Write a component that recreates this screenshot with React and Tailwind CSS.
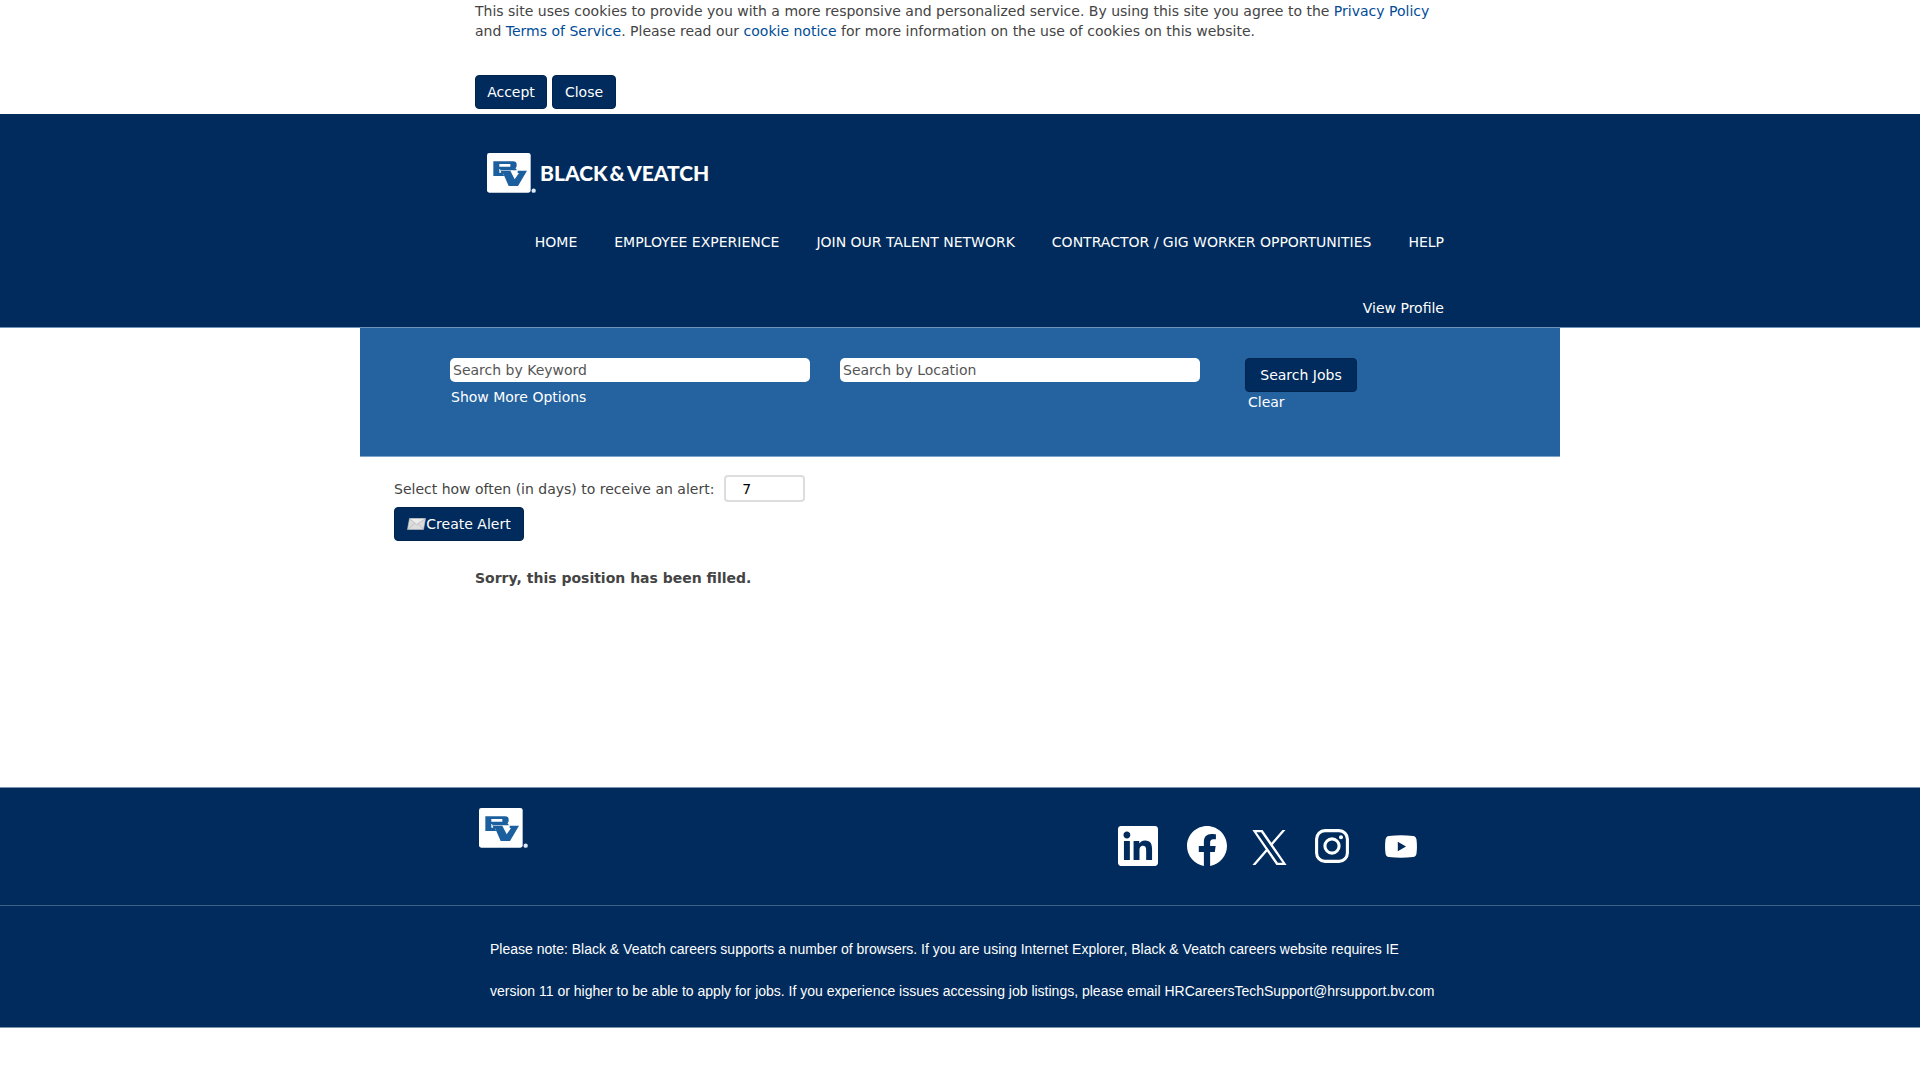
import React from "react";

const navItems = [
  "HOME",
  "EMPLOYEE EXPERIENCE",
  "JOIN OUR TALENT NETWORK",
  "CONTRACTOR / GIG WORKER OPPORTUNITIES",
  "HELP",
];

function BrandMark() {
  return (
    <svg viewBox="0 0 147 120" className="h-10 w-[49px]" role="img" aria-label="Black &amp; Veatch">
      <rect x="0" y="0" width="131" height="119" rx="7" fill="#fff" />
      <circle cx="140" cy="113" r="6.5" fill="#dcebf7" />
      <path
        fill="#1c5f9e"
        fillRule="evenodd"
        d="M19 25H78Q89 25 89 35V38Q89 43 85 46Q89 48 89 52H41L47 60L52 69H19ZM37 33V41H70V33ZM37 48V59H44L39 48Z"
      />
      <path fill="#1c5f9e" d="M41 53H70L83 79L96 60H92V53H120L93 99H65L49 62H44Z" />
    </svg>
  );
}

function Envelope() {
  return (
    <svg viewBox="0 0 19 12" className="h-3 w-[19px]" aria-hidden="true">
      <path d="M2.5.5H18.5L16.5 11.5H.5Z" fill="#dcdcdc" stroke="#c4c4c4" strokeWidth=".6" />
      <path d="M3.2.8H17.6L9.6 6.2Z" fill="#ececec" />
      <path d="M2.5.8 9.5 6.6 18.3.8M.8 11.3 7.5 5.4M16.3 11.3 11.5 5.8" fill="none" stroke="#b4b4b4" strokeWidth=".7" />
    </svg>
  );
}

const button =
  "flex h-[34px] cursor-pointer items-center justify-center rounded-[4px] border border-[#00254d] bg-[#002b5c] text-white";
const link = "text-[#004c97] hover:underline";

export default function App() {
  return (
    <div className="min-h-screen bg-white font-['Verdana','DejaVu_Sans',sans-serif] text-[14px] leading-5 text-[#444]">
      <section aria-label="Cookie notice" className="mx-auto max-w-[970px] pt-px pb-[5px]">
        <p>
          This site uses cookies to provide you with a more responsive and personalized service. By using this site you agree to the{" "}
          <a href="#privacy" className={link}>Privacy Policy</a> and{" "}
          <a href="#terms" className={link}>Terms of Service</a>. Please read our{" "}
          <a href="#cookies" className={link}>cookie notice</a> for more information on the use of cookies on this website.
        </p>
        <div className="mt-[34px] flex gap-[5px]">
          <button type="button" className={`${button} w-[72px]`}>Accept</button>
          <button type="button" className={`${button} w-16`}>Close</button>
        </div>
      </section>

      <header className="border-b border-[#6f93ba] bg-[#002b5c] text-white">
        <div className="mx-auto max-w-[970px] pt-[39px] pb-[9px]">
          <a href="#home" className="ml-3 flex h-10 w-fit items-center gap-1">
            <BrandMark />
            <span className="flex gap-[2px] font-['Lato',sans-serif] text-[21px] font-black">
              <span>BLACK</span>
              <span>&amp;</span>
              <span>VEATCH</span>
            </span>
          </a>
          <nav className="mt-[39px] flex justify-end gap-[37px] pr-px">
            {navItems.map((item) => (
              <a key={item} href="#nav" className="whitespace-nowrap hover:underline">{item}</a>
            ))}
          </nav>
          <div className="mt-[46px] flex justify-end pr-px">
            <a href="#profile" className="hover:underline">View Profile</a>
          </div>
        </div>
      </header>

      <main>
        <form className="mx-auto flex h-[129px] max-w-[1200px] items-start border-b border-[#7ea6cc] bg-[#2563a0] px-[90px] pt-[30px] text-white">
          <div className="w-[360px]">
            <input type="text" aria-label="Search by Keyword" placeholder="Search by Keyword" className="block h-6 w-full rounded-[5px] bg-white px-[3px] text-[#444] placeholder:text-[#555]" />
            <a href="#options" className="mt-[5px] ml-px block w-fit hover:underline">Show More Options</a>
          </div>
          <input type="text" aria-label="Search by Location" placeholder="Search by Location" className="ml-[30px] block h-6 w-[360px] rounded-[5px] bg-white px-[3px] text-[#444] placeholder:text-[#555]" />
          <div className="ml-[45px]">
            <button type="submit" className={`${button} w-28`}>Search Jobs</button>
            <a href="#clear" className="ml-[3px] block w-fit hover:underline">Clear</a>
          </div>
        </form>

        <div className="mx-auto max-w-[1132px] pt-[18px]">
          <div className="flex items-center gap-[10px]">
            <label htmlFor="frequency">Select how often (in days) to receive an alert:</label>
            <input id="frequency" type="text" defaultValue="7" className="h-[27px] w-[81px] rounded-[4px] border-2 border-[#ddd] px-4 text-black" />
          </div>
          <button type="button" className={`${button} mt-[5px] w-[130px]`}>
            <Envelope />
            Create Alert
          </button>
        </div>
        <div className="mx-auto min-h-[246px] max-w-[970px] pt-[27px]">
          <h1 className="font-bold">Sorry, this position has been filled.</h1>
        </div>
      </main>

      <footer className="border-y border-[#7c93ae] bg-[#002b5c] text-white">
        <div className="border-b border-[#405f86]">
          <div className="mx-auto flex max-w-[970px] justify-between pt-5 pb-[39px]">
            <a href="#home" className="ml-1"><BrandMark /></a>
            <div className="mt-[18px] mr-7 flex h-10 items-center">
              <a href="#linkedin" aria-label="LinkedIn">
                <svg viewBox="0 0 24 24" className="size-10" fill="currentColor">
                  <path d="M20.447 20.452h-3.554v-5.569c0-1.328-.027-3.037-1.852-3.037-1.853 0-2.136 1.445-2.136 2.939v5.667H9.351V9h3.414v1.561h.046c.477-.9 1.637-1.85 3.37-1.85 3.601 0 4.267 2.37 4.267 5.455v6.286zM5.337 7.433c-1.144 0-2.063-.926-2.063-2.065 0-1.138.92-2.063 2.063-2.063 1.14 0 2.064.925 2.064 2.063 0 1.139-.925 2.065-2.064 2.065zm1.782 13.019H3.555V9h3.564v11.452zM22.225 0H1.771C.792 0 0 .774 0 1.729v20.542C0 23.227.792 24 1.771 24h20.451C23.2 24 24 23.227 24 22.271V1.729C24 .774 23.2 0 22.222 0h.003z" />
                </svg>
              </a>
              <a href="#facebook" aria-label="Facebook" className="ml-[29px]">
                <svg viewBox="0 0 24 24" className="size-10" fill="currentColor">
                  <path d="M24 12.073c0-6.627-5.373-12-12-12s-12 5.373-12 12c0 5.99 4.388 10.954 10.125 11.854v-8.385H7.078v-3.47h3.047V9.43c0-3.007 1.792-4.669 4.533-4.669 1.312 0 2.686.235 2.686.235v2.953H15.83c-1.491 0-1.956.925-1.956 1.874v2.25h3.328l-.532 3.47h-2.796v8.385C19.612 23.027 24 18.062 24 12.073z" />
                </svg>
              </a>
              <a href="#x" aria-label="X" className="mt-[2px] ml-[25px]">
                <svg viewBox="0 0 1200 1227" className="size-[35px]" fill="currentColor">
                  <path d="M714.163 519.284L1160.89 0H1055.03L667.137 450.887L357.328 0H0L468.492 681.821L0 1226.37H105.866L515.491 750.218L842.672 1226.37H1200L714.137 519.284H714.163ZM569.165 687.828L521.697 619.934L144.011 79.6944H306.615L611.412 515.685L658.88 583.579L1055.08 1150.3H892.476L569.165 687.854V687.828Z" />
                </svg>
              </a>
              <a href="#instagram" aria-label="Instagram" className="ml-7">
                <svg viewBox="0 0 34 34" className="size-[34px]" fill="none" stroke="currentColor" strokeWidth="3.1">
                  <rect x="1.6" y="1.6" width="30.8" height="30.8" rx="8.4" />
                  <circle cx="17" cy="17" r="7.1" />
                  <circle cx="26" cy="8.2" r="2" fill="currentColor" stroke="none" />
                </svg>
              </a>
              <a href="#youtube" aria-label="YouTube" className="ml-9">
                <svg viewBox="0 0 32 23" className="h-[23px] w-8">
                  <path fill="#fff" fillRule="evenodd" d="M4 .9Q16-.6 28 .9Q31 1.3 31.5 4.5Q32.4 11.5 31.5 18.5Q31 21.7 28 22.1Q16 23.6 4 22.1Q1 21.7.5 18.5Q-.4 11.5.5 4.5Q1 1.3 4 .9ZM12.8 6.7V16.3L21 11.5Z" />
                </svg>
              </a>
            </div>
          </div>
        </div>
        <div className="mx-auto max-w-[970px] pt-[22px] pb-[15px] pl-[15px] font-['Liberation_Sans',sans-serif] leading-[42px]">
          <p>
            Please note: Black &amp; Veatch careers supports a number of browsers. If you are using Internet Explorer, Black &amp; Veatch careers website requires IE{" "}
            <br className="hidden lg:block" />
            version 11 or higher to be able to apply for jobs. If you experience issues accessing job listings, please email HRCareersTechSupport@hrsupport.bv.com
          </p>
        </div>
      </footer>
    </div>
  );
}
